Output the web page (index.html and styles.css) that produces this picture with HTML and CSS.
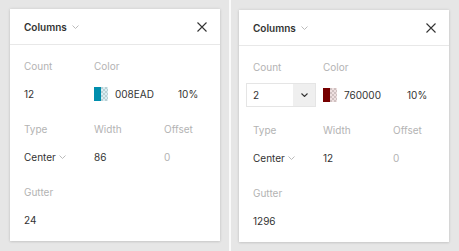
FILE: index.html
```html
<!DOCTYPE html>
<html lang="en">
<head>
    <meta charset="UTF-8">
    <meta name="viewport" content="width=device-width, initial-scale=1.0">
    <title>Layout Grid</title>
    <link rel="stylesheet" href="styles.css">
</head>
<body>

<div class="board">
    <div class="pane pane-left">
        <div class="panel">
            <div class="panel-header">
                <div class="panel-title">Columns <svg class="chev" width="7" height="4" viewBox="0 0 7 4"><polyline points="0.5,0.5 3.5,3.5 6.5,0.5" fill="none" stroke="#bbb" stroke-width="1"/></svg></div>
                <svg class="close" width="10" height="10" viewBox="0 0 10 10"><path d="M0.5 0.5 L9.5 9.5 M9.5 0.5 L0.5 9.5" stroke="#333" stroke-width="1.1" fill="none"/></svg>
            </div>
            <div class="fields">
                <div class="field">
                    <div class="label">Count</div>
                    <div class="value">12</div>
                </div>
                <div class="field field-wide">
                    <div class="label">Color</div>
                    <div class="value">
                        <span class="swatch swatch-teal"><span class="solid"></span><span class="alpha"></span></span>
                        <span class="hex">008EAD</span>
                        <span class="pct">10%</span>
                    </div>
                </div>
                <div class="field">
                    <div class="label">Type</div>
                    <div class="value">Center <svg class="chev" width="7" height="4" viewBox="0 0 7 4"><polyline points="0.5,0.5 3.5,3.5 6.5,0.5" fill="none" stroke="#bbb" stroke-width="1"/></svg></div>
                </div>
                <div class="field">
                    <div class="label">Width</div>
                    <div class="value">86</div>
                </div>
                <div class="field">
                    <div class="label">Offset</div>
                    <div class="value muted">0</div>
                </div>
                <div class="field">
                    <div class="label">Gutter</div>
                    <div class="value">24</div>
                </div>
            </div>
        </div>
    </div>

    <div class="split"></div>

    <div class="pane pane-right">
        <div class="panel">
            <div class="panel-header">
                <div class="panel-title">Columns <svg class="chev" width="7" height="4" viewBox="0 0 7 4"><polyline points="0.5,0.5 3.5,3.5 6.5,0.5" fill="none" stroke="#bbb" stroke-width="1"/></svg></div>
                <svg class="close" width="10" height="10" viewBox="0 0 10 10"><path d="M0.5 0.5 L9.5 9.5 M9.5 0.5 L0.5 9.5" stroke="#333" stroke-width="1.1" fill="none"/></svg>
            </div>
            <div class="fields">
                <div class="field">
                    <div class="label">Count</div>
                    <div class="value">
                        <div class="select-box">
                            <span class="select-text">2</span>
                            <span class="select-btn"><svg width="7" height="4" viewBox="0 0 7 4"><polyline points="0.5,0.5 3.5,3.5 6.5,0.5" fill="none" stroke="#333" stroke-width="1.1"/></svg></span>
                        </div>
                    </div>
                </div>
                <div class="field field-wide">
                    <div class="label">Color</div>
                    <div class="value">
                        <span class="swatch swatch-red"><span class="solid"></span><span class="alpha"></span></span>
                        <span class="hex">760000</span>
                        <span class="pct">10%</span>
                    </div>
                </div>
                <div class="field">
                    <div class="label">Type</div>
                    <div class="value">Center <svg class="chev" width="7" height="4" viewBox="0 0 7 4"><polyline points="0.5,0.5 3.5,3.5 6.5,0.5" fill="none" stroke="#bbb" stroke-width="1"/></svg></div>
                </div>
                <div class="field">
                    <div class="label">Width</div>
                    <div class="value">12</div>
                </div>
                <div class="field">
                    <div class="label">Offset</div>
                    <div class="value muted">0</div>
                </div>
                <div class="field">
                    <div class="label">Gutter</div>
                    <div class="value">1296</div>
                </div>
            </div>
        </div>
    </div>
</div>

</body>
</html>
```

FILE: styles.css
```css
body {
    margin: 0;
    font-family: Inter, "Noto Sans", sans-serif;
    font-size: 10px;
    color: #333;
    background: #fff;
}
.board {
    display: flex;
    width: 459px;
    height: 251px;
}
.pane {
    background: #e6e6e6;
    height: 251px;
    box-sizing: border-box;
}
.pane-left {
    width: 229px;
    padding: 9px 9px 0 10px;
}
.pane-right {
    width: 228px;
    padding: 10px 10px 0 8px;
}
.split {
    width: 2px;
    background: #fafafa;
}
.panel {
    width: 210px;
    height: 232px;
    background: #fff;
    box-shadow: 0 0 3px rgba(0, 0, 0, 0.12), 0 1px 2px rgba(0, 0, 0, 0.08);
}
.panel-header {
    height: 35px;
    border-bottom: 1px solid #e8e8e8;
    display: flex;
    align-items: center;
    justify-content: space-between;
    padding: 0 13px 0 14px;
}
.panel-title {
    font-weight: 600;
    display: flex;
    align-items: center;
    gap: 5px;
}
.fields {
    display: grid;
    grid-template-columns: 70px 70px 1fr;
    row-gap: 15px;
    padding: 13px 14px 0 14px;
}
.field-wide {
    grid-column: span 2;
}
.label {
    height: 16px;
    line-height: 16px;
    color: #b3b3b3;
    margin-bottom: 8px;
}
.value {
    height: 24px;
    display: flex;
    align-items: center;
    gap: 3px;
}
.muted {
    color: #b3b3b3;
}
.swatch {
    display: flex;
    width: 14px;
    height: 14px;
    margin-right: 4px;
}
.swatch .solid {
    width: 7px;
}
.swatch .alpha {
    flex: 1;
    background-size: 4px 4px;
}
.swatch-teal .solid {
    background: #008ead;
}
.swatch-teal .alpha {
    background-image: linear-gradient(rgba(0, 142, 173, 0.15), rgba(0, 142, 173, 0.15)), conic-gradient(#fff 25%, #dcdcdc 0 50%, #fff 0 75%, #dcdcdc 0);
}
.swatch-red .solid {
    background: #760000;
}
.swatch-red .alpha {
    background-image: linear-gradient(rgba(118, 0, 0, 0.12), rgba(118, 0, 0, 0.12)), conic-gradient(#fff 25%, #dcdcdc 0 50%, #fff 0 75%, #dcdcdc 0);
}
.hex {
    width: 60px;
}
.select-box {
    display: flex;
    width: 70px;
    height: 24px;
    margin-left: -7px;
    border: 1px solid #e5e5e5;
    box-sizing: border-box;
}
.select-text {
    flex: 1;
    padding-left: 6px;
    line-height: 22px;
}
.select-btn {
    width: 22px;
    background: #efefef;
    display: flex;
    align-items: center;
    justify-content: center;
}
```
